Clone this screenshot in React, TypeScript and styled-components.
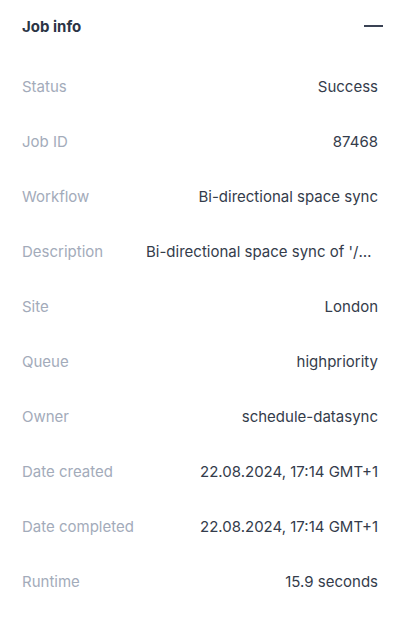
import React from "react";
import styled, { createGlobalStyle } from "styled-components";

const Global = createGlobalStyle`
  html, body { margin: 0; padding: 0; background: #ffffff; }
  body { font-family: Inter, "Noto Sans", sans-serif; }
`;

const Panel = styled.section`
  width: 403px;
  box-sizing: border-box;
  padding: 15px 25px 0 22px;
  background: #fff;
`;

const Header = styled.div`
  display: flex;
  align-items: center;
  justify-content: space-between;
  height: 22px;
  margin-bottom: 22px;
`;

const Title = styled.h2`
  margin: 0;
  font-size: 15px;
  font-weight: 700;
  color: #2b3445;
`;

const Collapse = styled.button`
  border: 0;
  background: none;
  padding: 0;
  width: 19px;
  height: 12px;
  margin-right: -5px;
  display: flex;
  align-items: center;
  cursor: pointer;
  &::before {
    content: "";
    display: block;
    width: 19px;
    height: 2px;
    background: #3a4254;
  }
`;

const List = styled.dl`
  margin: 0;
  display: flex;
  flex-direction: column;
`;

const Row = styled.div`
  display: flex;
  align-items: center;
  justify-content: space-between;
  height: 55px;
  font-size: 15px;
`;

const Label = styled.dt`
  color: #a3abba;
  white-space: nowrap;
`;

const Value = styled.dd<{ $truncate?: boolean }>`
  margin: 0;
  color: #343c4b;
  white-space: nowrap;
  overflow: hidden;
  text-overflow: ellipsis;
  max-width: ${(p) => (p.$truncate ? "226px" : "none")};
  margin-right: ${(p) => (p.$truncate ? "6px" : "0")};
`;

const rows: { label: string; value: string; truncate?: boolean }[] = [
  { label: "Status", value: "Success" },
  { label: "Job ID", value: "87468" },
  { label: "Workflow", value: "Bi-directional space sync" },
  { label: "Description", value: "Bi-directional space sync of '/projects/london' to '/projects/nyc'", truncate: true },
  { label: "Site", value: "London" },
  { label: "Queue", value: "highpriority" },
  { label: "Owner", value: "schedule-datasync" },
  { label: "Date created", value: "22.08.2024, 17:14 GMT+1" },
  { label: "Date completed", value: "22.08.2024, 17:14 GMT+1" },
  { label: "Runtime", value: "15.9 seconds" },
];

export default function App() {
  return (
    <>
      <Global />
      <Panel>
        <Header>
          <Title>Job info</Title>
          <Collapse aria-label="Collapse" />
        </Header>
        <List>
          {rows.map((r) => (
            <Row key={r.label}>
              <Label>{r.label}</Label>
              <Value $truncate={r.truncate}>{r.value}</Value>
            </Row>
          ))}
        </List>
      </Panel>
    </>
  );
}
